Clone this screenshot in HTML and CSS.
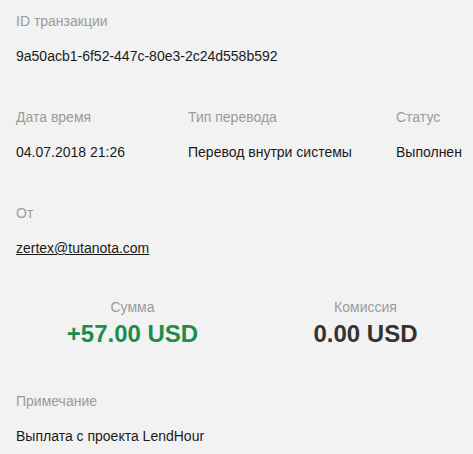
FILE: index.html
```html
<!DOCTYPE html>
<html lang="ru">
<head>
<meta charset="utf-8">
<link rel="stylesheet" href="styles.css">
</head>
<body>
<div class="page">
  <section class="block">
    <div class="label">ID транзакции</div>
    <div class="value">9a50acb1-6f52-447c-80e3-2c24d558b592</div>
  </section>
  <section class="block cols">
    <div class="col">
      <div class="label">Дата время</div>
      <div class="value">04.07.2018 21:26</div>
    </div>
    <div class="col">
      <div class="label">Тип перевода</div>
      <div class="value">Перевод внутри системы</div>
    </div>
    <div class="col">
      <div class="label">Статус</div>
      <div class="value">Выполнен</div>
    </div>
  </section>
  <section class="block">
    <div class="label">От</div>
    <div class="value"><a class="link" href="#">zertex@tutanota.com</a></div>
  </section>
  <section class="block amounts">
    <div class="amount-col">
      <div class="label">Сумма</div>
      <div class="amount plus">+57.00 USD</div>
    </div>
    <div class="amount-col">
      <div class="label">Комиссия</div>
      <div class="amount">0.00 USD</div>
    </div>
  </section>
  <section class="block">
    <div class="label">Примечание</div>
    <div class="value">Выплата с проекта LendHour</div>
  </section>
</div>
</body>
</html>
```
FILE: styles.css
```css
html, body {
  margin: 0;
  padding: 0;
  background: #f2f2f2;
  overflow: hidden;
}
body {
  font-family: "Liberation Sans", Arial, sans-serif;
  font-size: 14px;
  color: #1a1a1a;
}
.page {
  padding: 11px 0 0 16px;
  display: flex;
  flex-direction: column;
  gap: 41px;
}
.label {
  color: #9b9b9b;
  line-height: 20px;
}
.value {
  line-height: 20px;
  margin-top: 15px;
}
.link {
  color: #1a1a1a;
  text-decoration: underline;
}
.cols {
  display: grid;
  grid-template-columns: 172px 208px auto;
}
.amounts {
  display: grid;
  grid-template-columns: 233px 233px;
  text-align: center;
  margin-top: -2px;
}
.amount {
  font-size: 24px;
  font-weight: bold;
  line-height: 28px;
  margin-top: 3px;
  color: #333333;
}
.amount.plus {
  color: #1e8c4b;
}
.amounts + .block {
  margin-top: 2px;
}
```
